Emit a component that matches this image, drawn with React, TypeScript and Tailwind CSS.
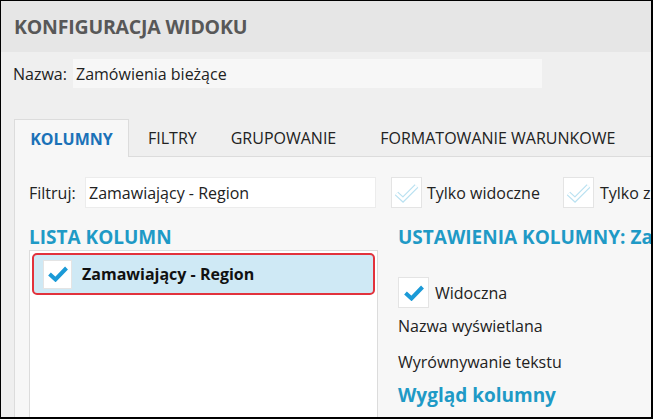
import React from 'react';

const font = { fontFamily: '"Open Sans", "Noto Sans", sans-serif' };

const Check = ({ size, faded }: { size: number; faded?: boolean }) => (
	<div
		className="bg-white border border-[#e4e4e4] flex items-center justify-center shrink-0"
		style={{ width: size, height: size }}
	>
		{faded ? (
			<svg width="25" height="20" viewBox="0 0 25 20">
				<path d="M2.5 10.5 L9 16.5 L22.5 3" fill="none" stroke="#b9e1f1" strokeWidth="5" strokeLinejoin="miter" />
				<path d="M2.5 10.5 L9 16.5 L22.5 3" fill="none" stroke="#ffffff" strokeWidth="2.6" strokeLinejoin="miter" />
			</svg>
		) : (
			<svg width="20" height="16" viewBox="0 0 20 16">
				<path d="M1.5 8 L7.5 13.5 L18.5 2" fill="none" stroke="#1b9ad7" strokeWidth="4" />
			</svg>
		)}
	</div>
);

export default function App() {
	return (
		<div
			className="w-[653px] h-[419px] overflow-hidden border-t border-l border-r-2 border-b-2 border-black bg-[#efefef] flex flex-col text-[#222]"
			style={font}
		>
			<div className="h-[51px] shrink-0 bg-[#e6e6e6] flex items-center pl-[13px]">
				<h1 className="text-[19.5px] font-bold text-[#585858] tracking-[-0.2px]">KONFIGURACJA WIDOKU</h1>
			</div>

			<div className="mt-[7px] h-[29px] shrink-0 flex items-center pl-[12px] text-[16px]">
				<span className="w-[60px] shrink-0">Nazwa:</span>
				<div className="w-[469px] shrink-0 h-full bg-[#f7f7f7] flex items-center pl-[3px]">Zamówienia bieżące</div>
			</div>

			<div className="mt-[31px] h-[37px] shrink-0 flex pl-[13px] text-[16px] relative z-10 whitespace-nowrap">
				<div className="w-[115px] shrink-0 h-[38px] bg-[#f7f7f7] border border-b-0 border-[#dcdcdc] flex items-center justify-center font-bold text-[#1b72b8]">
					KOLUMNY
				</div>
				<div className="ml-[19px] flex items-center">FILTRY</div>
				<div className="ml-[34px] flex items-center">GRUPOWANIE</div>
				<div className="ml-[44px] flex items-center">FORMATOWANIE WARUNKOWE</div>
			</div>

			<div className="flex-1 ml-[13px] bg-[#f7f7f7] border-l border-t border-[#dcdcdc] pl-[14px] pt-[20px] text-[16px] overflow-hidden">
				<div className="flex items-center h-[31px] whitespace-nowrap">
					<span className="w-[56px] shrink-0">Filtruj:</span>
					<div className="w-[291px] shrink-0 h-full bg-white border border-[#ececec] flex items-center pl-[3px]">
						Zamawiający - Region
					</div>
					<div className="ml-[15px] shrink-0">
						<Check size={31} faded />
					</div>
					<span className="ml-[5px] shrink-0">Tylko widoczne</span>
					<div className="ml-[23px] shrink-0">
						<Check size={31} faded />
					</div>
					<span className="ml-[6px] shrink-0">Tylko zmienione</span>
				</div>

				<div className="flex mt-[16px]">
					<div className="w-[349px] shrink-0">
						<h2 className="text-[19px] font-bold text-[#1f9ac6] leading-[26px]">LISTA KOLUMN</h2>
						<div className="h-[170px] bg-white border border-[#dcdcdc] p-[2px]">
							<div className="h-[42px] bg-[#cfe9f5] border-2 border-[#e2323c] rounded-[5px] flex items-center pl-[9px]">
								<Check size={29} />
								<span className="ml-[10px] font-bold text-[#111]">Zamawiający - Region</span>
							</div>
						</div>
					</div>

					<div className="ml-[20px] whitespace-nowrap">
						<h2 className="text-[19px] font-bold text-[#1f9ac6] leading-[26px]">USTAWIENIA KOLUMNY: Zamawiający</h2>
						<div className="mt-[27px] flex items-center">
							<Check size={31} />
							<span className="ml-[6px]">Widoczna</span>
						</div>
						<div className="mt-[6px] h-[24px] flex items-center">Nazwa wyświetlana</div>
						<div className="mt-[12px] h-[24px] flex items-center">Wyrównywanie tekstu</div>
						<div className="mt-[9px] h-[24px] flex items-center text-[19px] font-bold text-[#1f9ac6]">
							Wygląd kolumny
						</div>
					</div>
				</div>
			</div>
		</div>
	);
}
